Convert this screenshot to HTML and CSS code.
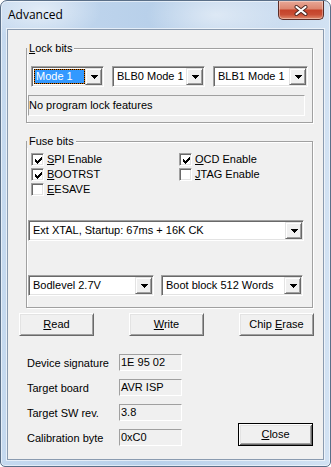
FILE: index.html
```html
<!DOCTYPE html>
<html>
<head>
<meta charset="utf-8">
<title>Advanced</title>
<link rel="stylesheet" href="styles.css">
</head>
<body>
<div class="window">
  <div class="titlebar">
    <span class="title">Advanced</span>
    <div class="close-x">
      <svg width="14" height="11" viewBox="0 0 14 11"><path d="M2.5 2 L11.5 9 M11.5 2 L2.5 9" stroke="#4a2620" stroke-width="4" stroke-linecap="round" fill="none"/><path d="M2.5 2 L11.5 9 M11.5 2 L2.5 9" stroke="#fff" stroke-width="2.2" stroke-linecap="round" fill="none"/></svg>
    </div>
  </div>
  <div class="client">
    <fieldset class="group lock">
      <legend><u>L</u>ock bits</legend>
      <div class="combos">
        <div class="combo c-mode focus">
          <div class="val"><div class="sel"><span>Mode 1</span></div></div>
          <span class="drop"><svg width="7" height="4" viewBox="0 0 7 4"><path d="M0 0h7v1h-7z M1 1h5v1h-5z M2 2h3v1h-3z M3 3h1v1h-1z"/></svg></span>
        </div>
        <div class="combo c-blb0">
          <div class="val">BLB0 Mode 1</div>
          <span class="drop"><svg width="7" height="4" viewBox="0 0 7 4"><path d="M0 0h7v1h-7z M1 1h5v1h-5z M2 2h3v1h-3z M3 3h1v1h-1z"/></svg></span>
        </div>
        <div class="combo c-blb1">
          <div class="val">BLB1 Mode 1</div>
          <span class="drop"><svg width="7" height="4" viewBox="0 0 7 4"><path d="M0 0h7v1h-7z M1 1h5v1h-5z M2 2h3v1h-3z M3 3h1v1h-1z"/></svg></span>
        </div>
      </div>
      <div class="static status">No program lock features</div>
    </fieldset>

    <fieldset class="group fuse">
      <legend>Fuse bits</legend>
      <div class="checks">
        <label class="check"><span class="box"><svg width="7" height="7" viewBox="0 0 7 7"><path d="M6 0h1v1h-1z M5 1h2v1h-2z M0 2h1v1h-1z M4 2h3v1h-3z M0 3h2v1h-2z M3 3h3v1h-3z M0 4h5v1h-5z M1 5h3v1h-3z M2 6h1v1h-1z"/></svg></span><span><u>S</u>PI Enable</span></label>
        <label class="check"><span class="box"><svg width="7" height="7" viewBox="0 0 7 7"><path d="M6 0h1v1h-1z M5 1h2v1h-2z M0 2h1v1h-1z M4 2h3v1h-3z M0 3h2v1h-2z M3 3h3v1h-3z M0 4h5v1h-5z M1 5h3v1h-3z M2 6h1v1h-1z"/></svg></span><span><u>O</u>CD Enable</span></label>
        <label class="check"><span class="box"><svg width="7" height="7" viewBox="0 0 7 7"><path d="M6 0h1v1h-1z M5 1h2v1h-2z M0 2h1v1h-1z M4 2h3v1h-3z M0 3h2v1h-2z M3 3h3v1h-3z M0 4h5v1h-5z M1 5h3v1h-3z M2 6h1v1h-1z"/></svg></span><span><u>B</u>OOTRST</span></label>
        <label class="check"><span class="box"></span><span><u>J</u>TAG Enable</span></label>
        <label class="check"><span class="box"></span><span><u>E</u>ESAVE</span></label>
      </div>
      <div class="combo c-clock">
        <div class="val">Ext XTAL, Startup: 67ms + 16K CK</div>
        <span class="drop"><svg width="7" height="4" viewBox="0 0 7 4"><path d="M0 0h7v1h-7z M1 1h5v1h-5z M2 2h3v1h-3z M3 3h1v1h-1z"/></svg></span>
      </div>
      <div class="combos bod">
        <div class="combo c-bod">
          <div class="val">Bodlevel 2.7V</div>
          <span class="drop"><svg width="7" height="4" viewBox="0 0 7 4"><path d="M0 0h7v1h-7z M1 1h5v1h-5z M2 2h3v1h-3z M3 3h1v1h-1z"/></svg></span>
        </div>
        <div class="combo c-boot">
          <div class="val">Boot block 512 Words</div>
          <span class="drop"><svg width="7" height="4" viewBox="0 0 7 4"><path d="M0 0h7v1h-7z M1 1h5v1h-5z M2 2h3v1h-3z M3 3h1v1h-1z"/></svg></span>
        </div>
      </div>
    </fieldset>

    <div class="buttons">
      <button class="btn"><u>R</u>ead</button>
      <button class="btn"><u>W</u>rite</button>
      <button class="btn">Chip <u>E</u>rase</button>
    </div>

    <div class="bottom">
      <div class="info">
        <span class="lbl">Device signature</span><span class="static field">1E 95 02</span>
        <span class="lbl">Target board</span><span class="static field">AVR ISP</span>
        <span class="lbl">Target SW rev.</span><span class="static field">3.8</span>
        <span class="lbl">Calibration byte</span><span class="static field">0xC0</span>
      </div>
      <button class="btn default"><u>C</u>lose</button>
    </div>
  </div>
</div>
</body>
</html>
```

FILE: styles.css
```css
* { box-sizing: border-box; }
html, body { margin: 0; padding: 0; background: #ffffff; }
body {
  width: 331px;
  height: 467px;
  overflow: hidden;
  font: 11px/13px "Liberation Sans", Arial, sans-serif;
  color: #000;
}
u { text-decoration: underline; text-underline-offset: 1px; text-decoration-thickness: 1px; }

/* ---------- window frame ---------- */
.window {
  width: 331px;
  height: 467px;
  border: 1px solid #5a6f88;
  border-radius: 7px 7px 5px 5px;
  padding: 0 6px 6px 6px;
  display: flex;
  flex-direction: column;
  background:
    radial-gradient(ellipse 60px 30px at 40px 10px, rgba(255,255,255,.55), rgba(255,255,255,0)),
    radial-gradient(ellipse 70px 30px at 215px 14px, rgba(255,255,255,.45), rgba(255,255,255,0)),
    linear-gradient(90deg, #c5d9ef 0%, #b8d0ea 45%, #c6d9ee 75%, #d2e2f3 100%);
  box-shadow: inset 0 0 0 1px rgba(255,255,255,.55);
}
.titlebar {
  height: 28px;
  display: flex;
  align-items: flex-start;
  justify-content: space-between;
}
.title {
  font: 12px/16px "Segoe UI", "Open Sans", sans-serif;
  margin: 6px 0 0 1px;
  color: #000;
}
.close-x {
  width: 46px;
  height: 19px;
  border: 1px solid #5b2d27;
  border-top: none;
  border-radius: 0 0 5px 5px;
  background: linear-gradient(#e8a897 0%, #dd8771 42%, #c5432a 52%, #c94e35 75%, #df8a6c 100%);
  box-shadow: inset 0 0 0 1px rgba(255,255,255,.35);
  display: flex;
  align-items: center;
  justify-content: center;
}
.close-x svg { display: block; }

.client {
  flex: 1;
  background: #f0f0f0;
  border: 1px solid #8a9bb0;
  box-shadow: 0 0 0 1px rgba(255,255,255,.6);
  display: flex;
  flex-direction: column;
}

/* ---------- group boxes ---------- */
.group {
  margin: 12px 0 0 18px;
  width: 287px;
  min-width: 0;
  padding: 0;
  border: 1px solid #a0a0a0;
  box-shadow: inset 1px 1px 0 #fff, 1px 1px 0 #fff;
}
.group legend {
  padding: 0 2px;
  margin: 0;
  line-height: 13px;
  background: #f0f0f0;
}

/* ---------- combo boxes ---------- */
.combos { display: flex; }
.lock .combos { margin: 11px 0 0 4px; }
.combo {
  height: 21px;
  display: flex;
  background: #fff;
  border: 1px solid;
  border-color: #a0a0a0 #fff #fff #a0a0a0;
  box-shadow: inset 1px 1px 0 #696969, inset -1px -1px 0 #e3e3e3;
  padding: 1px;
}
.combo .val {
  flex: 1;
  min-width: 0;
  padding-left: 3px;
  display: flex;
  align-items: center;
  white-space: nowrap;
  overflow: hidden;
}
.combo .drop {
  width: 17px;
  height: 17px;
  flex: none;
  background: #f0f0f0;
  border: 1px solid;
  border-color: #e3e3e3 #696969 #696969 #e3e3e3;
  box-shadow: inset 1px 1px 0 #fff, inset -1px -1px 0 #a0a0a0;
  display: flex;
  align-items: center;
  justify-content: center;
  padding-left: 1px;
}
.combo .drop svg { display: block; fill: #000; }

.c-mode { width: 73px; }
.c-blb0 { width: 93px; margin-left: 8px; }
.c-blb1 { width: 95px; margin-left: 8px; }

.focus .val { padding: 1px 0 1px 1px; align-items: stretch; }
.focus .sel {
  flex: 1;
  display: flex;
  border: 1px dotted #000;
  background: #cc6600;
}
.focus .sel span {
  flex: 1;
  background: #3399ff;
  color: #fff;
  padding-left: 1px;
  display: flex;
  align-items: center;
}

.static {
  border: 1px solid;
  border-color: #a0a0a0 #fff #fff #a0a0a0;
  background: #f0f0f0;
}
.status {
  margin: 8px 0 6px 1px;
  width: 277px;
  height: 21px;
  display: flex;
  align-items: center;
  padding-left: 0;
}

/* ---------- check boxes ---------- */
.checks {
  display: grid;
  grid-template-columns: 148px 1fr;
  grid-auto-rows: 15px;
  margin: 4px 0 0 4px;
}
.check {
  display: flex;
  align-items: center;
  white-space: nowrap;
}
.check .box {
  width: 13px;
  height: 13px;
  flex: none;
  margin-right: 3px;
  background: #fff;
  border: 1px solid;
  border-color: #a0a0a0 #fff #fff #a0a0a0;
  box-shadow: inset 1px 1px 0 #696969, inset -1px -1px 0 #e3e3e3;
  padding: 2px 0 0 2px;
}
.check .box svg { display: block; fill: #000; margin: 1px 0 0 1px; }

.c-clock { width: 276px; margin: 23px 0 0 1px; }
.bod { margin: 34px 0 11px 1px; }
.c-bod { width: 126px; }
.c-boot { width: 142px; margin-left: 7px; }

/* ---------- buttons ---------- */
.btn {
  appearance: none;
  margin: 0;
  font: inherit;
  color: #000;
  width: 75px;
  height: 23px;
  padding: 0;
  background: #f0f0f0;
  border: 1px solid;
  border-color: #fff #696969 #696969 #fff;
  box-shadow: inset 1px 1px 0 #e3e3e3, inset -1px -1px 0 #a0a0a0;
  text-align: center;
  line-height: 13px;
}
.btn.default {
  border: 1px solid #000;
  box-shadow: inset 1px 1px 0 #fff, inset -1px -1px 0 #696969, inset 2px 2px 0 #e3e3e3, inset -2px -2px 0 #a0a0a0;
}
.buttons {
  display: flex;
  justify-content: space-between;
  width: 295px;
  margin: 5px 0 0 11px;
}

/* ---------- info ---------- */
.bottom {
  display: flex;
  align-items: flex-end;
  justify-content: space-between;
  width: 286px;
  margin: 18px 0 0 19px;
}
.info {
  display: grid;
  grid-template-columns: 92px 63px;
  grid-auto-rows: 17px;
  row-gap: 8px;
}
.lbl {
  display: flex;
  align-items: center;
  padding-top: 2px;
}
.field {
  display: flex;
  align-items: center;
  padding-left: 1px;
}
```
